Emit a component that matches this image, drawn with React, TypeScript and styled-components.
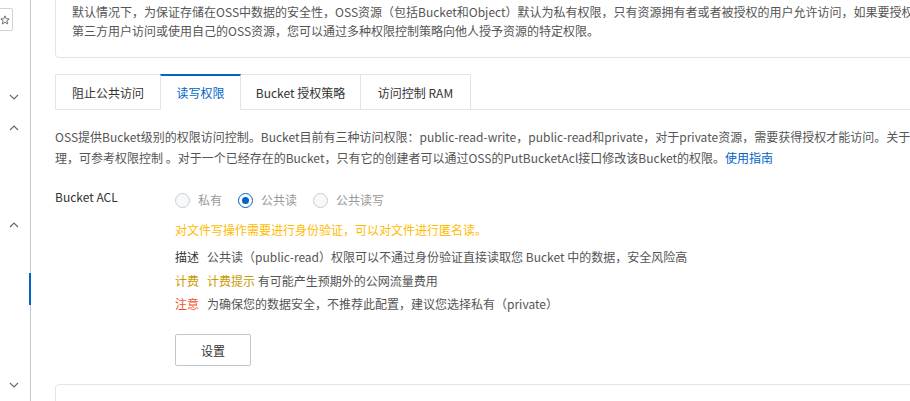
import React from "react";
import styled, { createGlobalStyle } from "styled-components";

const Global = createGlobalStyle`
  html, body { margin: 0; padding: 0; background: #fff; overflow: hidden; }
  body { font-family: "Segoe UI", "Noto Sans CJK SC", "Noto Sans", sans-serif; font-size: 12px; color: #555; }
  * { box-sizing: border-box; }
`;

const Page = styled.div`
  display: flex;
  width: 910px;
  height: 401px;
  overflow: hidden;
`;

const Sidebar = styled.aside`
  position: relative;
  flex: 0 0 31px;
  border-right: 1px solid #c4c8ce;
  display: flex;
  flex-direction: column;
  align-items: flex-start;
`;

const StarBox = styled.div`
  margin-top: 8px;
  margin-left: -9px;
  width: 22px;
  height: 23px;
  border: 1px solid #cfd3d8;
  border-radius: 2px;
  display: flex;
  align-items: center;
  justify-content: flex-end;
  padding-right: 2px;
`;

const Chevron = styled.div<{ $top: number }>`
  margin-top: ${(p) => p.$top}px;
  margin-left: 9px;
  width: 10px;
  height: 6px;
  display: flex;
`;

const ActiveMark = styled.div`
  position: absolute;
  right: -1px;
  top: 273px;
  width: 2px;
  height: 32px;
  background: #0064c8;
`;

const Main = styled.main`
  flex: 1;
  min-width: 0;
  padding-left: 24px;
  overflow: hidden;
`;

const Card = styled.div<{ $top?: boolean }>`
  width: 1000px;
  border: 1px solid #e3e4e6;
  border-radius: 4px;
  ${(p) => (p.$top ? "margin-top: -13px; padding: 14px 16px 17px 16px;" : "margin-top: 18px; height: 60px;")}
`;

const Line = styled.div<{ $lh: number }>`
  white-space: nowrap;
  line-height: ${(p) => p.$lh}px;
`;

const Tabs = styled.div`
  margin-top: 16px;
  display: flex;
  border-bottom: 1px solid #e3e4e6;
  width: 1000px;
  height: 36px;
`;

const Tab = styled.div<{ $active?: boolean; $w: number }>`
  width: ${(p) => p.$w}px;
  height: 36px;
  margin-right: -1px;
  display: flex;
  align-items: center;
  justify-content: center;
  border: 1px solid #e3e4e6;
  border-top: ${(p) => (p.$active ? "2px solid #0064c8" : "1px solid #e3e4e6")};
  border-bottom: ${(p) => (p.$active ? "1px solid #fff" : "1px solid #e3e4e6")};
  background: #fff;
  color: ${(p) => (p.$active ? "#0064c8" : "#333")};
  font-size: 12px;
  position: relative;
  z-index: ${(p) => (p.$active ? 1 : 0)};
  padding-bottom: ${(p) => (p.$active ? "1px" : "0")};
`;

const Desc = styled.div`
  margin-top: 16px;
`;

const Link = styled.span`
  color: #0064c8;
`;

const FormRow = styled.div`
  margin-top: 25px;
  display: flex;
`;

const Label = styled.div`
  flex: 0 0 120px;
  color: #333;
  line-height: 18px;
  margin-top: -5px;
`;

const Field = styled.div`
  display: flex;
  flex-direction: column;
  align-items: flex-start;
`;

const RadioGroup = styled.div`
  display: flex;
  align-items: center;
  height: 14px;
  gap: 16px;
`;

const RadioItem = styled.label`
  display: flex;
  align-items: center;
  gap: 8px;
  color: #999;
  line-height: 14px;
`;

const RadioCircle = styled.span<{ $checked?: boolean }>`
  width: 15px;
  height: 15px;
  border-radius: 50%;
  border: 1px solid ${(p) => (p.$checked ? "#0064c8" : "#c9ced4")};
  background: ${(p) => (p.$checked ? "#fff" : "#f7f9fa")};
  display: flex;
  align-items: center;
  justify-content: center;
  &::after {
    content: "";
    display: ${(p) => (p.$checked ? "block" : "none")};
    width: 7px;
    height: 7px;
    border-radius: 50%;
    background: #0064c8;
  }
`;

const Warn = styled.div`
  margin-top: 14px;
  color: #ffbb00;
  line-height: 18px;
`;

const InfoRow = styled.div<{ $mt: number }>`
  margin-top: ${(p) => p.$mt}px;
  line-height: 18px;
  color: #555;
  white-space: nowrap;
`;

const Tag = styled.span<{ $color: string }>`
  color: ${(p) => p.$color};
  margin-right: 8px;
`;

const Hl = styled.span<{ $color: string }>`
  color: ${(p) => p.$color};
`;

const Button = styled.button`
  margin-top: 21px;
  width: 76px;
  height: 32px;
  border: 1px solid #c0c6cc;
  border-radius: 2px;
  background: #fff;
  color: #333;
  font-family: inherit;
  font-size: 12px;
  padding: 0;
`;

const Down = () => (
  <svg width="10" height="6" viewBox="0 0 10 6">
    <polyline points="1,1 5,5 9,1" fill="none" stroke="#666" strokeWidth="1.1" />
  </svg>
);
const Up = () => (
  <svg width="10" height="6" viewBox="0 0 10 6">
    <polyline points="1,5 5,1 9,5" fill="none" stroke="#666" strokeWidth="1.1" />
  </svg>
);

export default function App() {
  return (
    <>
      <Global />
      <Page>
        <Sidebar>
          <StarBox>
            <svg width="10" height="10" viewBox="0 0 24 24">
              <polygon
                points="12,2 15,9 22,9.5 16.5,14 18.5,21.5 12,17.5 5.5,21.5 7.5,14 2,9.5 9,9"
                fill="none"
                stroke="#555"
                strokeWidth="2"
                strokeLinejoin="round"
              />
            </svg>
          </StarBox>
          <Chevron $top={63}><Down /></Chevron>
          <Chevron $top={25}><Up /></Chevron>
          <Chevron $top={91}><Up /></Chevron>
          <Chevron $top={154}><Down /></Chevron>
          <ActiveMark />
        </Sidebar>
        <Main>
          <Card $top>
            <Line $lh={19}>
              默认情况下，为保证存储在OSS中数据的安全性，OSS资源（包括Bucket和Object）默认为私有权限，只有资源拥有者或者被授权的用户允许访问，如果要授权第三方
            </Line>
            <Line $lh={19}>
              第三方用户访问或使用自己的OSS资源，您可以通过多种权限控制策略向他人授予资源的特定权限。
            </Line>
          </Card>
          <Tabs>
            <Tab $w={106}>阻止公共访问</Tab>
            <Tab $w={81} $active>读写权限</Tab>
            <Tab $w={121}>Bucket 授权策略</Tab>
            <Tab $w={111}>访问控制 RAM</Tab>
          </Tabs>
          <Desc>
            <Line $lh={21}>
              OSS提供Bucket级别的权限访问控制。Bucket目前有三种访问权限：public-read-write，public-read和private，对于private资源，需要获得授权才能访问。关于授权管
            </Line>
            <Line $lh={21}>
              理，可参考权限控制 。对于一个已经存在的Bucket，只有它的创建者可以通过OSS的PutBucketAcl接口修改该Bucket的权限。<Link>使用指南</Link>
            </Line>
          </Desc>
          <FormRow>
            <Label>Bucket ACL</Label>
            <Field>
              <RadioGroup>
                <RadioItem><RadioCircle />私有</RadioItem>
                <RadioItem><RadioCircle $checked />公共读</RadioItem>
                <RadioItem><RadioCircle />公共读写</RadioItem>
              </RadioGroup>
              <Warn>对文件写操作需要进行身份验证，可以对文件进行匿名读。</Warn>
              <InfoRow $mt={9}>
                <Tag $color="#333">描述</Tag>公共读（public-read）权限可以不通过身份验证直接读取您 Bucket 中的数据，安全风险高
              </InfoRow>
              <InfoRow $mt={6}>
                <Tag $color="#c99a06">计费</Tag><Hl $color="#c99a06">计费提示</Hl> 有可能产生预期外的公网流量费用
              </InfoRow>
              <InfoRow $mt={5}>
                <Tag $color="#f5512b">注意</Tag>为确保您的数据安全，不推荐此配置，建议您选择私有（private）
              </InfoRow>
              <Button>设置</Button>
            </Field>
          </FormRow>
          <Card />
        </Main>
      </Page>
    </>
  );
}
